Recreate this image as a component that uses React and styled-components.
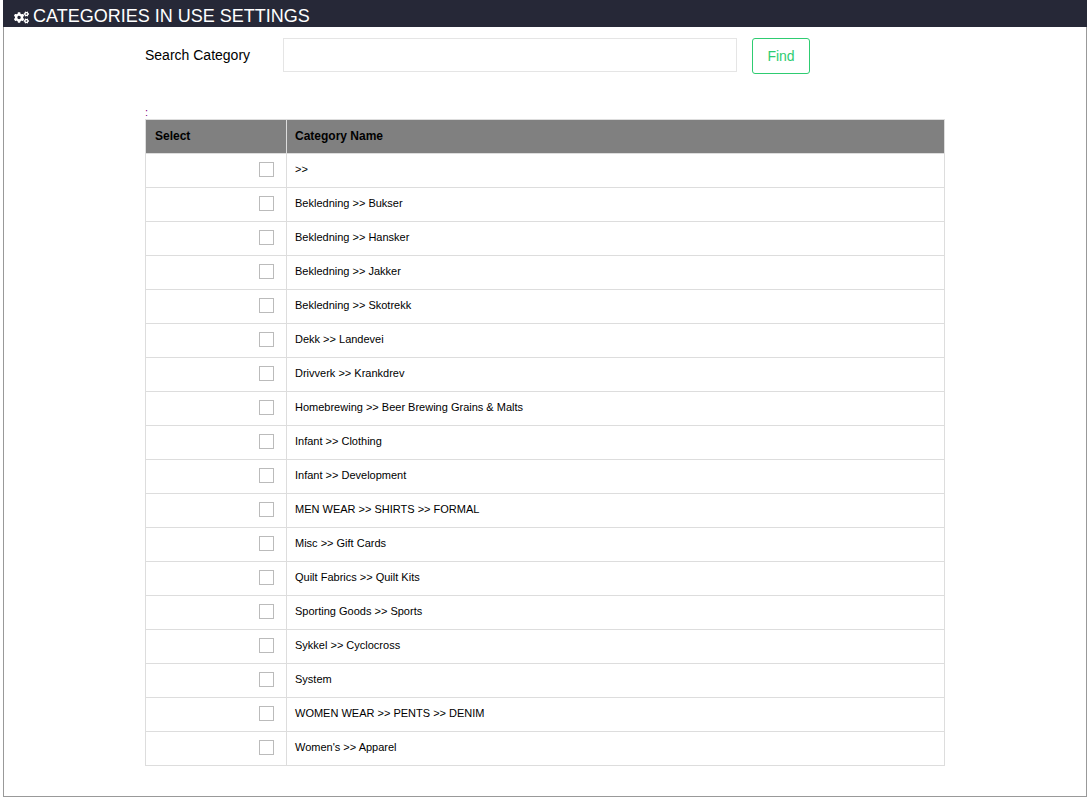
import React from "react";
import styled, { createGlobalStyle } from "styled-components";
import { FaCogs } from "react-icons/fa";

const categories = [
  ">>",
  "Bekledning >> Bukser",
  "Bekledning >> Hansker",
  "Bekledning >> Jakker",
  "Bekledning >> Skotrekk",
  "Dekk >> Landevei",
  "Drivverk >> Krankdrev",
  "Homebrewing >> Beer Brewing Grains & Malts",
  "Infant >> Clothing",
  "Infant >> Development",
  "MEN WEAR >> SHIRTS >> FORMAL",
  "Misc >> Gift Cards",
  "Quilt Fabrics >> Quilt Kits",
  "Sporting Goods >> Sports",
  "Sykkel >> Cyclocross",
  "System",
  "WOMEN WEAR >> PENTS >> DENIM",
  "Women's >> Apparel",
];

const GlobalStyle = createGlobalStyle`
  html, body {
    margin: 0;
    padding: 0;
    background: #fff;
  }
  body {
    font-family: "Liberation Sans", Arial, sans-serif;
    color: #000;
  }
  * {
    box-sizing: border-box;
  }
`;

const Frame = styled.div`
  margin-left: 3px;
  width: 1084px;
  height: 797px;
  border: 1px solid #999;
  border-top: 0;
`;

const TitleBar = styled.div`
  height: 27px;
  margin: 0 -1px;
  padding: 5px 0 0 11px;
  background: #262837;
  color: #fff;
  display: flex;
  align-items: center;
  gap: 4px;
  font-size: 18px;
  line-height: 20px;
`;

const TitleIcon = styled(FaCogs)`
  margin-top: 3px;
  flex: none;
`;

const Content = styled.div`
  width: 800px;
  margin-left: 141px;
`;

const SearchRow = styled.div`
  display: flex;
  align-items: flex-start;
  padding-top: 11px;
  height: 81px;
`;

const SearchLabel = styled.label`
  width: 138px;
  font-size: 14px;
  line-height: 34px;
`;

const SearchInput = styled.input`
  width: 454px;
  height: 34px;
  border: 1px solid #e5e5e5;
  outline: none;
`;

const FindButton = styled.button`
  width: 58px;
  height: 36px;
  margin-left: 15px;
  background: #fff;
  border: 1px solid #2ecc71;
  border-radius: 3px;
  color: #2ecc71;
  font-family: inherit;
  font-size: 14px;
`;

const Mark = styled.div`
  height: 11px;
  font-size: 11px;
  line-height: 8px;
  color: #800080;
`;

const Table = styled.table`
  width: 800px;
  border-collapse: collapse;
  table-layout: fixed;
  font-size: 11px;
`;

const HeadCell = styled.th`
  width: ${(p) => p.$width || "auto"};
  height: 34px;
  padding: 0 8px 2px ${(p) => p.$indent || "8px"};
  background: #808080;
  border: 1px solid #ddd;
  font-size: 12px;
  text-align: left;
`;

const Cell = styled.td`
  height: 34px;
  padding: 0 8px 3px;
  border: 1px solid #ddd;
`;

const BoxCell = styled(Cell)`
  padding-right: 12px;
  padding-bottom: 2px;
  text-align: right;
`;

const Box = styled.span`
  display: inline-block;
  width: 15px;
  height: 15px;
  border: 1px solid #bbb;
  vertical-align: middle;
`;

const App = () => (
  <>
    <GlobalStyle />
    <Frame>
      <TitleBar>
        <TitleIcon size={15} />
        CATEGORIES IN USE SETTINGS
      </TitleBar>
      <Content>
        <SearchRow>
          <SearchLabel>Search Category</SearchLabel>
          <SearchInput type="text" />
          <FindButton>Find</FindButton>
        </SearchRow>
        <Mark>:</Mark>
        <Table>
          <thead>
            <tr>
              <HeadCell $width="141px" $indent="9px">Select</HeadCell>
              <HeadCell>Category Name</HeadCell>
            </tr>
          </thead>
          <tbody>
            {categories.map((name) => (
              <tr key={name}>
                <BoxCell>
                  <Box />
                </BoxCell>
                <Cell>{name}</Cell>
              </tr>
            ))}
          </tbody>
        </Table>
      </Content>
    </Frame>
  </>
);

export default App;
